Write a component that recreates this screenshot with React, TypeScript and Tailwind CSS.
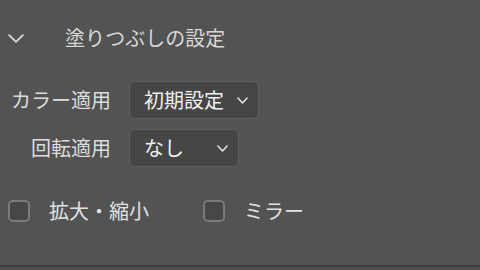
import React from "react";

const font = { fontFamily: '"Noto Sans CJK JP", "Noto Sans", sans-serif' };

function Chevron({ w, h, sw, color }: { w: number; h: number; sw: number; color: string }) {
  const p = sw / 2 + 0.2;
  return (
    <svg width={w} height={h} viewBox={`0 0 ${w} ${h}`} fill="none">
      <polyline
        points={`${p},${p} ${w / 2},${h - p} ${w - p},${p}`}
        stroke={color}
        strokeWidth={sw}
        strokeLinecap="round"
        strokeLinejoin="round"
      />
    </svg>
  );
}

function Select({ label, width }: { label: string; width: string }) {
  return (
    <div
      className={`${width} h-[38px] flex items-center justify-between pl-[14px] pr-[10px] rounded-[5px] border border-[#5f5f5f] bg-[#464646] text-[#f0f0f0] text-[20px]`}
    >
      <span className="leading-none">{label}</span>
      <Chevron w={11} h={7} sw={1.5} color="#e6e6e6" />
    </div>
  );
}

function Check({ label }: { label: string }) {
  return (
    <div className="flex items-center gap-[19px]">
      <div className="w-[22px] h-[22px] rounded-[5px] border-2 border-[#7a7a7a] bg-[#474747]" />
      <span className="text-[20px] text-[#e2e2e2] leading-none">{label}</span>
    </div>
  );
}

export default function App() {
  return (
    <div className="w-[480px] h-[270px] bg-[#535353] flex flex-col overflow-hidden" style={font}>
      <div className="h-[76px] shrink-0 flex items-center pl-[8px] gap-[41px]">
        <Chevron w={16} h={9} sw={1.8} color="#d8d8d8" />
        <span className="text-[20px] text-[#d8d8d8] leading-none">塗りつぶしの設定</span>
      </div>
      <div className="pt-[5px] grid grid-cols-[111px_auto] gap-x-[18px] gap-y-[10px] items-center justify-start">
        <span className="text-right text-[20px] text-[#dcdcdc] leading-none">カラー適用</span>
        <Select label="初期設定" width="w-[130px]" />
        <span className="text-right text-[20px] text-[#dcdcdc] leading-none">回転適用</span>
        <Select label="なし" width="w-[110px]" />
      </div>
      <div className="mt-[33px] pl-[8px] flex items-center gap-[54px]">
        <Check label="拡大・縮小" />
        <Check label="ミラー" />
      </div>
      <div className="flex-1" />
      <div className="h-[2px] bg-[#3c3c3c] shrink-0" />
      <div className="h-[3px] bg-[#4e4e4e] shrink-0" />
    </div>
  );
}
